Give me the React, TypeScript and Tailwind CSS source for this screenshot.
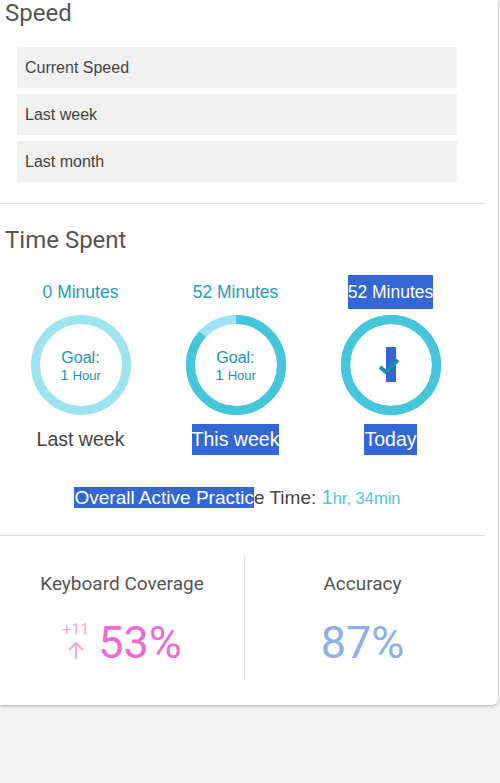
import React from "react";

const hl = "bg-[#3367d6] text-white";

function Ring({ pct, track }: { pct: number; track: string }) {
  const r = 45.5;
  const c = 2 * Math.PI * r;
  return (
    <svg width="100" height="100" viewBox="0 0 100 100" className="absolute inset-0">
      <circle cx="50" cy="50" r={r} fill="none" stroke={track} strokeWidth="9" />
      {pct > 0 && (
        <circle
          cx="50"
          cy="50"
          r={r}
          fill="none"
          stroke="#45c7db"
          strokeWidth="9"
          strokeDasharray={`${c * pct} ${c}`}
          transform="rotate(-90 50 50)"
        />
      )}
    </svg>
  );
}

function Goal() {
  return (
    <div className="relative text-center text-[#1b95b5] leading-[17px] mt-[2px]">
      <div className="text-[16px]">Goal:</div>
      <div className="text-[15px]">
        1 <span className="text-[13px]">Hour</span>
      </div>
    </div>
  );
}

const cols = [
  { mins: "0 Minutes", label: "Last week", pct: 0, track: "#9de3f1", sel: false },
  { mins: "52 Minutes", label: "This week", pct: 52 / 60, track: "#9de3f1", sel: false },
  { mins: "52 Minutes", label: "Today", pct: 1, track: "#45c7db", sel: true },
];

export default function App() {
  return (
    <div className="min-h-[783px] bg-[#f4f4f4] font-['Liberation_Sans',Arial,sans-serif]">
      <div className="w-[498px] bg-white rounded-br-[6px] shadow-[0_1px_3px_rgba(0,0,0,0.3)] pb-[25px]">
        <h2 className="pl-[5px] text-[24px] leading-[26px] font-['Roboto',sans-serif] text-[#555]">Speed</h2>
        <div className="mt-[21px] ml-[17px] w-[440px] flex flex-col gap-[6px]">
          {["Current Speed", "Last week", "Last month"].map((t) => (
            <div key={t} className="h-[41px] pl-[8px] flex items-center bg-[#f1f1f1] text-[16px] text-[#444]">
              {t}
            </div>
          ))}
        </div>
        <div className="mt-[21px] h-px w-[485px] bg-[#dddddd]" />

        <h2 className="mt-[23px] pl-[5px] text-[24px] leading-[26px] font-['Roboto',sans-serif] text-[#555]">Time Spent</h2>
        <div className="mt-[22px] ml-[3px] w-[465px] grid grid-cols-3">
          {cols.map((c, i) => (
            <div key={i} className="flex flex-col items-center">
              <div className="h-[34px] flex items-center">
                <span className={`text-[17.5px] leading-[34px] ${c.sel ? hl : "text-[#1a9cc0]"}`}>{c.mins}</span>
              </div>
              <div className="relative mt-[6px] w-[100px] h-[100px] flex items-center justify-center">
                <Ring pct={c.pct} track={c.track} />
                {c.sel ? (
                  <svg width="24" height="40" viewBox="0 0 24 40" className="relative">
                    <rect x="7" y="2" width="10" height="35" fill="#3367d6" />
                    <polyline points="1,22 7,27 19,15" fill="none" stroke="#1a8fa8" strokeWidth="4" />
                  </svg>
                ) : (
                  <Goal />
                )}
              </div>
              <div className="mt-[9px] h-[31px] flex items-center">
                <span className={`text-[19.5px] leading-[31px] ${i > 0 ? hl : "text-[#444]"}`}>{c.label}</span>
              </div>
            </div>
          ))}
        </div>

        <div className="mt-[27px] w-[475px] text-center text-[19px] leading-[31px] text-[#444]">
          <span className={hl}>Overall Active Practic</span>e Time:{" "}
          <span className="text-[#4ec5dc] text-[20px]">
            1<span className="text-[16.5px]">hr, 34min</span>
          </span>
        </div>
        <div className="mt-[21px] h-px w-[485px] bg-[#d5dce3]" />

        <div className="pt-[20px] w-[480px] flex font-['Roboto',sans-serif]">
          <div className="w-[245px] h-[124px] border-r border-[#d5dce3] flex flex-col items-center">
            <div className="mt-[16px] text-[19px] leading-[24px] text-[#555]">Keyboard Coverage</div>
            <div className="mt-[22px] flex items-start">
              <div className="flex flex-col items-center mr-[9px] mt-[4px] text-[#f5a8e6]">
                <span className="text-[16px] leading-[16px]">+11</span>
                <svg width="18" height="20" viewBox="0 0 18 20" className="mt-[2px]">
                  <path d="M9 19V3M2 10l7-7 7 7" fill="none" stroke="#f5a8e6" strokeWidth="2.2" />
                </svg>
              </div>
              <span className="text-[45px] leading-[50px] text-[#f06ad3]">53%</span>
            </div>
          </div>
          <div className="flex-1 flex flex-col items-center">
            <div className="mt-[16px] text-[19px] leading-[24px] text-[#555]">Accuracy</div>
            <div className="mt-[22px] text-[45px] leading-[50px] text-[#8db0e8]">87%</div>
          </div>
        </div>
      </div>
    </div>
  );
}
